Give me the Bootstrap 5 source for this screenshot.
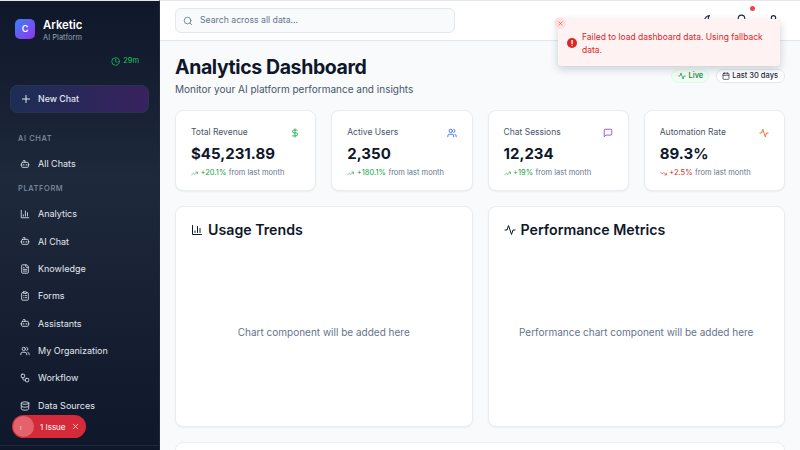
<!DOCTYPE html>
<html lang="en">
<head>
    <meta charset="UTF-8">
    <meta name="viewport" content="width=device-width, initial-scale=1.0">
    <link href="https://cdn.jsdelivr.net/npm/bootstrap@5.3.0/dist/css/bootstrap.min.css" rel="stylesheet">
    <script src="https://cdn.jsdelivr.net/npm/bootstrap@5.3.0/dist/js/bootstrap.bundle.min.js"></script>
    <title>Arketic</title>
    <style>
        html, body { height: 100%; overflow: hidden; }
        body { font-family: "Inter", "Liberation Sans", sans-serif; background: #f8fafc; color: #0f172a; }
        svg { fill: none; stroke: currentColor; stroke-width: 2; stroke-linecap: round; stroke-linejoin: round; flex-shrink: 0; }

        .app-shell { height: 450px; width: 800px; }
        .side-bar { width: 160px; height: 450px; background: linear-gradient(180deg, #0f172a 0%, #1e293b 40%, #0f172a 100%); border-top: 1px solid #e5e7eb; border-right: 1px solid #1e293b; padding-top: 14px; overflow: hidden; }
        .brand-row { padding: 0 15px; height: 30px; gap: 8px; }
        .brand-logo { width: 20px; height: 20px; margin-top: -2px; border-radius: 5px; background: linear-gradient(135deg, #3b82f6, #9333ea); color: #fff; font-size: 9px; font-weight: 600; }
        .brand-name { color: #fff; font-size: 11.3px; font-weight: 600; line-height: 14px; margin-top: 1px; }
        .brand-sub { color: #94a3b8; font-size: 7.5px; line-height: 10px; margin-top: 1.5px; }
        .timer-row { color: #22c55e; font-size: 7.5px; gap: 3px; padding-right: 20px; margin-top: 9px; height: 14px; }
        .new-chat { margin: 17px 10px 0; height: 28px; border-radius: 7px; background: linear-gradient(90deg, #1d2d55, #38225f); border: 1px solid #27344f; color: #e2e8f0; font-size: 8.8px; font-weight: 500; padding-left: 8.5px; gap: 6.5px; }
        .nav-head { color: #7f8ea3; font-size: 7.5px; font-weight: 500; letter-spacing: .6px; padding-left: 18px; line-height: 10px; }
        .nav-row { color: #e2e8f0; font-size: 9px; font-weight: 400; padding-left: 20px; gap: 8px; height: 27.4px; }

        .top-bar { height: 41px; background: #fff; border-top: 1px solid #e5e7eb; border-bottom: 1px solid #e2e8f0; padding-left: 15px; }
        .search-box { width: 280px; height: 25px; background: #f8fafc; border: 1px solid #e2e8f0; border-radius: 6px; color: #64748b; font-size: 8.7px; padding-left: 7px; gap: 7px; }
        .top-icons { color: #1e293b; gap: 19px; padding-right: 20px; }
        .red-dot { top: -8px; right: -7px; width: 5px; height: 5px; background: #ef4444; }

        .page-body { padding: 15px 15px 0 15px; }
        .page-title { font-size: 19.5px; font-weight: 700; letter-spacing: -.4px; line-height: 23px; margin: 0; color: #0f172a; }
        .page-sub { font-size: 10px; color: #475569; line-height: 14px; margin: 3px 0 0; }
        .pill-row { gap: 7px; margin-top: 13px; }
        .pill-live { background: #f0fdf4; border: 1px solid #dcfce7; color: #15803d; font-size: 7.5px; font-weight: 500; height: 14px; border-radius: 7px; padding: 0 5px 0 6px; gap: 3px; }
        .pill-range { background: #fff; border: 1px solid #e2e8f0; color: #1e293b; font-size: 7.5px; font-weight: 500; height: 14px; border-radius: 7px; padding: 0 6px 0 5px; gap: 2px; }

        .stat-grid { display: grid; grid-template-columns: repeat(4, 1fr); gap: 15px; margin-top: 14px; }
        .stat-box { height: 81px; border: 1px solid #e8edf3; border-radius: 8px; box-shadow: 0 1px 2px rgba(15,23,42,.05); padding: 15px; }
        .stat-label { font-size: 8.5px; font-weight: 400; color: #475569; line-height: 13px; }
        .stat-value { font-size: 15px; font-weight: 700; line-height: 18px; margin-top: 6px; color: #0f172a; }
        .stat-note { font-size: 7.5px; color: #64748b; line-height: 10px; margin-top: 5px; gap: 2.5px; }
        .up { color: #16a34a; }
        .down { color: #dc2626; }

        .chart-grid { display: grid; grid-template-columns: repeat(2, 1fr); gap: 15px; margin-top: 15px; }
        .chart-box { height: 221px; border: 1px solid #e8edf3; border-radius: 8px; box-shadow: 0 1px 2px rgba(15,23,42,.05); padding: 13px 15px; }
        .chart-title { font-size: 14.2px; font-weight: 600; line-height: 20px; gap: 5px; color: #0f172a; }
        .chart-empty { font-size: 10px; color: #64748b; height: 184px; }
        .last-box { height: 30px; margin-top: 15px; border: 1px solid #e8edf3; border-radius: 8px; }

        .fail-toast { top: 19px; left: 558px; width: 222px; height: 47px; background: #fef2f2; border-radius: 4px; box-shadow: 0 3px 9px rgba(15,23,42,.2); color: #dc2626; font-size: 8.5px; line-height: 13px; padding: 12px 10px 0 24px; }
        .toast-x { top: -2px; left: -4px; width: 12px; height: 12px; border-radius: 50%; background: #fee2e2; color: #ef4444; }
        .toast-mark { top: 19px; left: 9px; width: 10px; height: 10px; background: #dc2626; color: #fff; font-size: 8px; font-weight: 700; line-height: 10px; }
        .issue-pill { left: 12px; top: 415px; width: 74px; height: 23px; background: #d42a39; border-radius: 12px; color: #fff; font-size: 8px; font-weight: 400; padding-left: 28px; gap: 5px; }
        .issue-knob { left: 1px; top: 1px; width: 21px; height: 21px; background: #e3626c; font-size: 5px; line-height: 24px; padding-left: 7px; }
        .side-foot { top: 445px; left: 0; width: 159px; border-top: 1px solid #1e293b; }
    </style>
</head>
<body>
    <div class="app-shell d-flex position-relative">
        <!-- Sidebar -->
        <aside class="side-bar flex-shrink-0">
            <div class="brand-row d-flex align-items-center">
                <div class="brand-logo d-flex align-items-center justify-content-center">C</div>
                <div>
                    <div class="brand-name">Arketic</div>
                    <div class="brand-sub">AI Platform</div>
                </div>
            </div>
            <div class="timer-row d-flex align-items-center justify-content-end">
                <svg width="9" height="9" viewBox="0 0 24 24"><circle cx="12" cy="12" r="10"/><path d="M12 6v6l4 2"/></svg>
                <span>29m</span>
            </div>
            <div class="new-chat d-flex align-items-center">
                <svg width="12" height="12" viewBox="0 0 24 24" stroke-width="1.5"><path d="M5 12h14M12 5v14"/></svg>
                <span>New Chat</span>
            </div>
            <div class="nav-head" style="margin-top:21px">AI CHAT</div>
            <div class="nav-row d-flex align-items-center" style="margin-top:6.5px">
                <svg width="10" height="10" viewBox="0 0 24 24"><path d="M12 8V4H8"/><rect x="4" y="8" width="16" height="12" rx="2"/><path d="M2 14h2M20 14h2M15 13v2M9 13v2"/></svg>
                <span>All Chats</span>
            </div>
            <div class="nav-head" style="margin-top:6px">PLATFORM</div>
            <div class="nav-row d-flex align-items-center" style="margin-top:6.3px">
                <svg width="10" height="10" viewBox="0 0 24 24"><path d="M3 3v18h18M18 17V9M13 17V5M8 17v-3"/></svg>
                <span>Analytics</span>
            </div>
            <div class="nav-row d-flex align-items-center">
                <svg width="10" height="10" viewBox="0 0 24 24"><path d="M12 8V4H8"/><rect x="4" y="8" width="16" height="12" rx="2"/><path d="M2 14h2M20 14h2M15 13v2M9 13v2"/></svg>
                <span>AI Chat</span>
            </div>
            <div class="nav-row d-flex align-items-center">
                <svg width="10" height="10" viewBox="0 0 24 24"><path d="M15 2H6a2 2 0 0 0-2 2v16a2 2 0 0 0 2 2h12a2 2 0 0 0 2-2V7z"/><path d="M14 2v4a2 2 0 0 0 2 2h4M16 13H8M16 17H8M10 9H8"/></svg>
                <span>Knowledge</span>
            </div>
            <div class="nav-row d-flex align-items-center">
                <svg width="10" height="10" viewBox="0 0 24 24"><rect x="8" y="2" width="8" height="4" rx="1"/><path d="M16 4h2a2 2 0 0 1 2 2v14a2 2 0 0 1-2 2H6a2 2 0 0 1-2-2V6a2 2 0 0 1 2-2h2M12 11h4M12 16h4M8 11h.01M8 16h.01"/></svg>
                <span>Forms</span>
            </div>
            <div class="nav-row d-flex align-items-center">
                <svg width="10" height="10" viewBox="0 0 24 24"><path d="M12 8V4H8"/><rect x="4" y="8" width="16" height="12" rx="2"/><path d="M2 14h2M20 14h2M15 13v2M9 13v2"/></svg>
                <span>Assistants</span>
            </div>
            <div class="nav-row d-flex align-items-center">
                <svg width="10" height="10" viewBox="0 0 24 24"><path d="M16 21v-2a4 4 0 0 0-4-4H6a4 4 0 0 0-4 4v2"/><circle cx="9" cy="7" r="4"/><path d="M22 21v-2a4 4 0 0 0-3-3.87M16 3.13a4 4 0 0 1 0 7.75"/></svg>
                <span>My Organization</span>
            </div>
            <div class="nav-row d-flex align-items-center">
                <svg width="10" height="10" viewBox="0 0 24 24"><rect x="3" y="3" width="8" height="8" rx="2"/><path d="M7 11v4a2 2 0 0 0 2 2h4"/><rect x="13" y="13" width="8" height="8" rx="2"/></svg>
                <span>Workflow</span>
            </div>
            <div class="nav-row d-flex align-items-center">
                <svg width="10" height="10" viewBox="0 0 24 24"><ellipse cx="12" cy="5" rx="9" ry="3"/><path d="M3 5v14a9 3 0 0 0 18 0V5"/><path d="M3 12a9 3 0 0 0 18 0"/></svg>
                <span>Data Sources</span>
            </div>
        </aside>

        <!-- Main -->
        <div class="flex-grow-1 overflow-hidden">
            <header class="top-bar d-flex align-items-center justify-content-between">
                <div class="search-box d-flex align-items-center">
                    <svg width="10" height="10" viewBox="0 0 24 24" stroke="#94a3b8"><circle cx="11" cy="11" r="8"/><path d="m21 21-4.3-4.3"/></svg>
                    <span>Search across all data...</span>
                </div>
                <div class="top-icons d-flex align-items-center">
                    <svg width="13" height="13" viewBox="0 0 24 24"><path d="M12 3a6 6 0 0 0 9 9 9 9 0 1 1-9-9Z"/></svg>
                    <div class="position-relative d-flex">
                        <svg width="13" height="13" viewBox="0 0 24 24"><path d="M6 8a6 6 0 0 1 12 0c0 7 3 9 3 9H3s3-2 3-9"/><path d="M10.3 21a1.94 1.94 0 0 0 3.4 0"/></svg>
                        <span class="red-dot position-absolute rounded-circle"></span>
                    </div>
                    <svg width="13" height="13" viewBox="0 0 24 24"><path d="M19 21v-2a4 4 0 0 0-4-4H9a4 4 0 0 0-4 4v2"/><circle cx="12" cy="7" r="4"/></svg>
                </div>
            </header>

            <main class="page-body">
                <div class="d-flex justify-content-between align-items-start">
                    <div>
                        <h1 class="page-title">Analytics Dashboard</h1>
                        <p class="page-sub">Monitor your AI platform performance and insights</p>
                    </div>
                    <div class="pill-row d-flex">
                        <span class="pill-live d-flex align-items-center">
                            <svg width="8" height="8" viewBox="0 0 24 24"><path d="M22 12h-4l-3 9L9 3l-3 9H2"/></svg>Live
                        </span>
                        <span class="pill-range d-flex align-items-center">
                            <svg width="8" height="8" viewBox="0 0 24 24"><path d="M8 2v4M16 2v4"/><rect x="3" y="4" width="18" height="18" rx="2"/><path d="M3 10h18"/></svg>Last 30 days
                        </span>
                    </div>
                </div>

                <div class="stat-grid">
                    <div class="stat-box bg-white">
                        <div class="d-flex justify-content-between align-items-center">
                            <span class="stat-label">Total Revenue</span>
                            <svg width="10" height="10" viewBox="0 0 24 24" color="#16a34a"><path d="M12 2v20M17 5H9.5a3.5 3.5 0 0 0 0 7h5a3.5 3.5 0 0 1 0 7H6"/></svg>
                        </div>
                        <div class="stat-value">$45,231.89</div>
                        <div class="stat-note d-flex align-items-center">
                            <svg class="up" width="7" height="7" viewBox="0 0 24 24"><path d="m22 7-8.5 8.5-5-5L2 17M16 7h6v6"/></svg>
                            <span class="up">+20.1%</span><span>from last month</span>
                        </div>
                    </div>
                    <div class="stat-box bg-white">
                        <div class="d-flex justify-content-between align-items-center">
                            <span class="stat-label">Active Users</span>
                            <svg width="10" height="10" viewBox="0 0 24 24" color="#2563eb"><path d="M16 21v-2a4 4 0 0 0-4-4H6a4 4 0 0 0-4 4v2"/><circle cx="9" cy="7" r="4"/><path d="M22 21v-2a4 4 0 0 0-3-3.87M16 3.13a4 4 0 0 1 0 7.75"/></svg>
                        </div>
                        <div class="stat-value">2,350</div>
                        <div class="stat-note d-flex align-items-center">
                            <svg class="up" width="7" height="7" viewBox="0 0 24 24"><path d="m22 7-8.5 8.5-5-5L2 17M16 7h6v6"/></svg>
                            <span class="up">+180.1%</span><span>from last month</span>
                        </div>
                    </div>
                    <div class="stat-box bg-white">
                        <div class="d-flex justify-content-between align-items-center">
                            <span class="stat-label">Chat Sessions</span>
                            <svg width="10" height="10" viewBox="0 0 24 24" color="#9333ea"><path d="M21 15a2 2 0 0 1-2 2H7l-4 4V5a2 2 0 0 1 2-2h14a2 2 0 0 1 2 2z"/></svg>
                        </div>
                        <div class="stat-value">12,234</div>
                        <div class="stat-note d-flex align-items-center">
                            <svg class="up" width="7" height="7" viewBox="0 0 24 24"><path d="m22 7-8.5 8.5-5-5L2 17M16 7h6v6"/></svg>
                            <span class="up">+19%</span><span>from last month</span>
                        </div>
                    </div>
                    <div class="stat-box bg-white">
                        <div class="d-flex justify-content-between align-items-center">
                            <span class="stat-label">Automation Rate</span>
                            <svg width="10" height="10" viewBox="0 0 24 24" color="#ea580c"><path d="M22 12h-4l-3 9L9 3l-3 9H2"/></svg>
                        </div>
                        <div class="stat-value">89.3%</div>
                        <div class="stat-note d-flex align-items-center">
                            <svg class="down" width="7" height="7" viewBox="0 0 24 24"><path d="m22 17-8.5-8.5-5 5L2 7M16 17h6v-6"/></svg>
                            <span class="down">+2.5%</span><span>from last month</span>
                        </div>
                    </div>
                </div>

                <div class="chart-grid">
                    <div class="chart-box bg-white">
                        <div class="chart-title d-flex align-items-center">
                            <svg width="12" height="12" viewBox="0 0 24 24"><path d="M3 3v18h18M18 17V9M13 17V5M8 17v-3"/></svg>Usage Trends
                        </div>
                        <div class="chart-empty d-flex align-items-center justify-content-center">Chart component will be added here</div>
                    </div>
                    <div class="chart-box bg-white">
                        <div class="chart-title d-flex align-items-center">
                            <svg width="12" height="12" viewBox="0 0 24 24"><path d="M22 12h-4l-3 9L9 3l-3 9H2"/></svg>Performance Metrics
                        </div>
                        <div class="chart-empty d-flex align-items-center justify-content-center">Performance chart component will be added here</div>
                    </div>
                </div>
                <div class="last-box bg-white"></div>
            </main>
        </div>

        <!-- Overlays -->
        <div class="side-foot position-absolute"></div>
        <div class="fail-toast position-absolute">
            <span class="toast-x position-absolute d-flex align-items-center justify-content-center">
                <svg width="7" height="7" viewBox="0 0 24 24"><path d="M18 6 6 18M6 6l12 12"/></svg>
            </span>
            <span class="toast-mark position-absolute rounded-circle text-center">!</span>
            Failed to load dashboard data. Using fallback data.
        </div>
        <div class="issue-pill position-absolute d-flex align-items-center">
            <span class="issue-knob position-absolute rounded-circle">!</span>
            <span>1 Issue</span>
            <svg width="9" height="9" viewBox="0 0 24 24"><path d="M18 6 6 18M6 6l12 12"/></svg>
        </div>
    </div>
</body>
</html>
